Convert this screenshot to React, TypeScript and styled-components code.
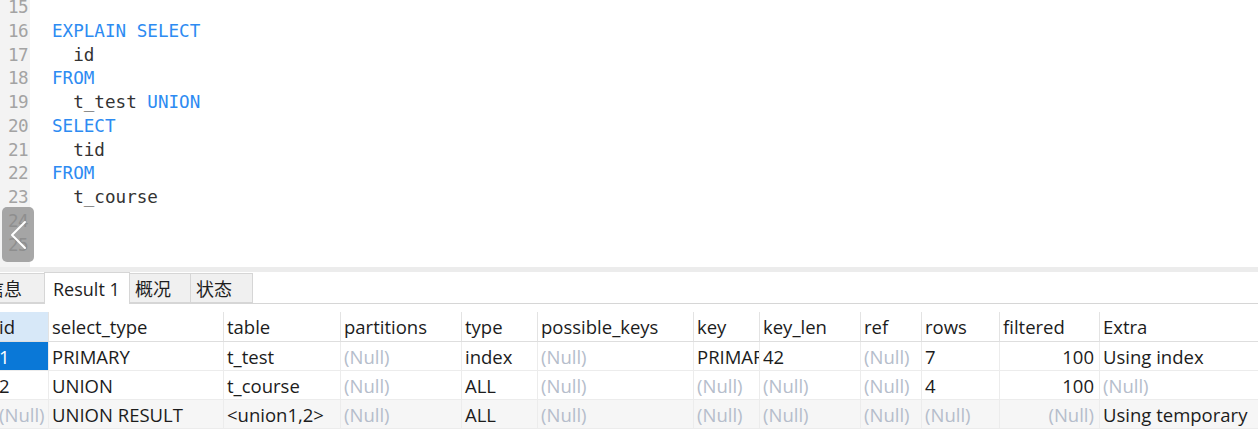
import React from "react";
import styled, { createGlobalStyle } from "styled-components";

const GlobalStyle = createGlobalStyle`
  html, body {
    margin: 0;
    padding: 0;
    background: #ffffff;
    overflow: hidden;
  }
`;

const Page = styled.div`
  display: flex;
  flex-direction: column;
  width: 1258px;
  height: 436px;
  overflow: hidden;
  background: #fff;
`;

/* ---------- editor ---------- */

const Editor = styled.div`
  position: relative;
  display: flex;
  height: 267px;
  overflow: hidden;
  font-family: "DejaVu Sans Mono", "Liberation Mono", monospace;
  font-size: 17.6px;
  line-height: 23.75px;
`;

const Gutter = styled.div`
  width: 30px;
  flex-shrink: 0;
  background: #f3f3f3;
  color: #a3a3a3;
  text-align: right;
`;

const CodeArea = styled.div`
  flex: 1;
  padding-left: 22px;
  color: #333;
`;

const Lines = styled.div`
  margin-top: -4px;
`;

const GutterLines = styled(Lines)`
  padding-right: 2px;
  letter-spacing: -0.6px;
`;

const Line = styled.div`
  height: 23.75px;
  white-space: pre;
`;

const Kw = styled.span`
  color: #2d8bf2;
`;

const ScrollButton = styled.div`
  position: absolute;
  left: 2px;
  top: 207px;
  width: 32px;
  height: 55px;
  border-radius: 5px;
  background: rgba(135, 135, 135, 0.72);
  display: flex;
  align-items: center;
  justify-content: center;
`;

const Splitter = styled.div`
  height: 5px;
  background: #ececec;
  flex-shrink: 0;
`;

/* ---------- tabs ---------- */

const TabBar = styled.div`
  display: flex;
  align-items: flex-end;
  height: 32px;
  margin-left: -20px;
  border-bottom: 1px solid #d6d6d6;
  box-sizing: border-box;
  font-family: "Open Sans", "Noto Sans CJK SC", sans-serif;
  font-size: 18px;
  color: #1e1e1e;
  flex-shrink: 0;
`;

const Tab = styled.div<{ $active?: boolean; $w: number }>`
  box-sizing: border-box;
  width: ${(p) => p.$w}px;
  height: ${(p) => (p.$active ? 32 : 30)}px;
  margin-bottom: ${(p) => (p.$active ? -1 : 0)}px;
  padding-left: ${(p) => (p.$active ? 8 : 5)}px;
  display: flex;
  align-items: center;
  background: ${(p) => (p.$active ? "#ffffff" : "#f0f0f0")};
  border: 1px solid #d6d6d6;
  border-bottom: ${(p) => (p.$active ? "none" : "1px solid #d6d6d6")};
  margin-right: -1px;
  white-space: nowrap;
  overflow: hidden;
  position: relative;
  z-index: ${(p) => (p.$active ? 1 : 0)};
`;

/* ---------- grid ---------- */

const Grid = styled.table`
  margin-top: 8px;
  margin-left: -5px;
  border-collapse: collapse;
  table-layout: fixed;
  width: 1268px;
  font-family: "Open Sans", "Noto Sans CJK SC", sans-serif;
  font-size: 18.5px;
  color: #1c1c1c;
`;

const HeadCell = styled.th<{ $current?: boolean }>`
  height: 29px;
  padding: 0 3px;
  text-align: left;
  font-weight: normal;
  white-space: nowrap;
  overflow: hidden;
  background: ${(p) => (p.$current ? "#d7e8f8" : "#ffffff")};
  border-left: 1px solid #e3e3e3;
  border-bottom: 1px solid #dedede;
`;

const Row = styled.tr<{ $alt?: boolean }>`
  background: ${(p) => (p.$alt ? "#f6f6f6" : "#ffffff")};
`;

const Cell = styled.td<{ $null?: boolean; $right?: boolean; $selected?: boolean }>`
  height: 28px;
  padding: 0 ${(p) => (p.$right ? 5 : 3)}px 0 3px;
  white-space: nowrap;
  overflow: hidden;
  text-overflow: clip;
  text-align: ${(p) => (p.$right ? "right" : "left")};
  color: ${(p) => (p.$selected ? "#ffffff" : p.$null ? "#b5bdcb" : "#1c1c1c")};
  background: ${(p) => (p.$selected ? "#0a78d7" : "transparent")};
  border-left: 1px solid #ececec;
  border-bottom: 1px solid #ececec;
`;

type Tok = { t: string; kw?: boolean };

const code: Tok[][] = [
  [],
  [{ t: "EXPLAIN SELECT", kw: true }],
  [{ t: "  id" }],
  [{ t: "FROM", kw: true }],
  [{ t: "  t_test " }, { t: "UNION", kw: true }],
  [{ t: "SELECT", kw: true }],
  [{ t: "  tid" }],
  [{ t: "FROM", kw: true }],
  [{ t: "  t_course" }],
  [],
  [],
];

const columns: { name: string; width: number; right?: boolean }[] = [
  { name: "id", width: 53 },
  { name: "select_type", width: 175 },
  { name: "table", width: 117 },
  { name: "partitions", width: 121 },
  { name: "type", width: 76 },
  { name: "possible_keys", width: 156 },
  { name: "key", width: 66 },
  { name: "key_len", width: 101 },
  { name: "ref", width: 61 },
  { name: "rows", width: 78 },
  { name: "filtered", width: 100, right: true },
  { name: "Extra", width: 164 },
];

const NULL = null;
const rows: (string | null)[][] = [
  ["1", "PRIMARY", "t_test", NULL, "index", NULL, "PRIMARY", "42", NULL, "7", "100", "Using index"],
  ["2", "UNION", "t_course", NULL, "ALL", NULL, NULL, NULL, NULL, "4", "100", NULL],
  [NULL, "UNION RESULT", "<union1,2>", NULL, "ALL", NULL, NULL, NULL, NULL, NULL, NULL, "Using temporary"],
];

const tabs = [
  { label: "信息", w: 65 },
  { label: "Result 1", w: 86, active: true },
  { label: "概况", w: 62 },
  { label: "状态", w: 63 },
];

export default function App() {
  return (
    <Page>
      <GlobalStyle />
      <Editor>
        <Gutter>
          <GutterLines>
            {code.map((_, i) => (
              <Line key={i}>{15 + i}</Line>
            ))}
          </GutterLines>
        </Gutter>
        <CodeArea>
          <Lines>
            {code.map((line, i) => (
              <Line key={i}>
                {line.map((tok, j) =>
                  tok.kw ? <Kw key={j}>{tok.t}</Kw> : <span key={j}>{tok.t}</span>
                )}
              </Line>
            ))}
          </Lines>
        </CodeArea>
        <ScrollButton>
          <svg width="32" height="55" viewBox="0 0 32 55">
            <polyline
              points="23,15 10,28 23,41"
              fill="none"
              stroke="#ffffff"
              strokeWidth="2"
              strokeLinecap="round"
              strokeLinejoin="round"
            />
          </svg>
        </ScrollButton>
      </Editor>
      <Splitter />
      <TabBar>
        {tabs.map((t) => (
          <Tab key={t.label} $active={t.active} $w={t.w}>
            {t.label}
          </Tab>
        ))}
      </TabBar>
      <Grid>
        <colgroup>
          {columns.map((c) => (
            <col key={c.name} style={{ width: c.width }} />
          ))}
        </colgroup>
        <thead>
          <tr>
            {columns.map((c, i) => (
              <HeadCell key={c.name} $current={i === 0}>
                {c.name}
              </HeadCell>
            ))}
          </tr>
        </thead>
        <tbody>
          {rows.map((r, ri) => (
            <Row key={ri} $alt={ri === 2}>
              {r.map((v, ci) => (
                <Cell
                  key={ci}
                  $null={v === null}
                  $right={columns[ci].right}
                  $selected={ri === 0 && ci === 0}
                >
                  {v === null ? "(Null)" : v}
                </Cell>
              ))}
            </Row>
          ))}
        </tbody>
      </Grid>
    </Page>
  );
}
